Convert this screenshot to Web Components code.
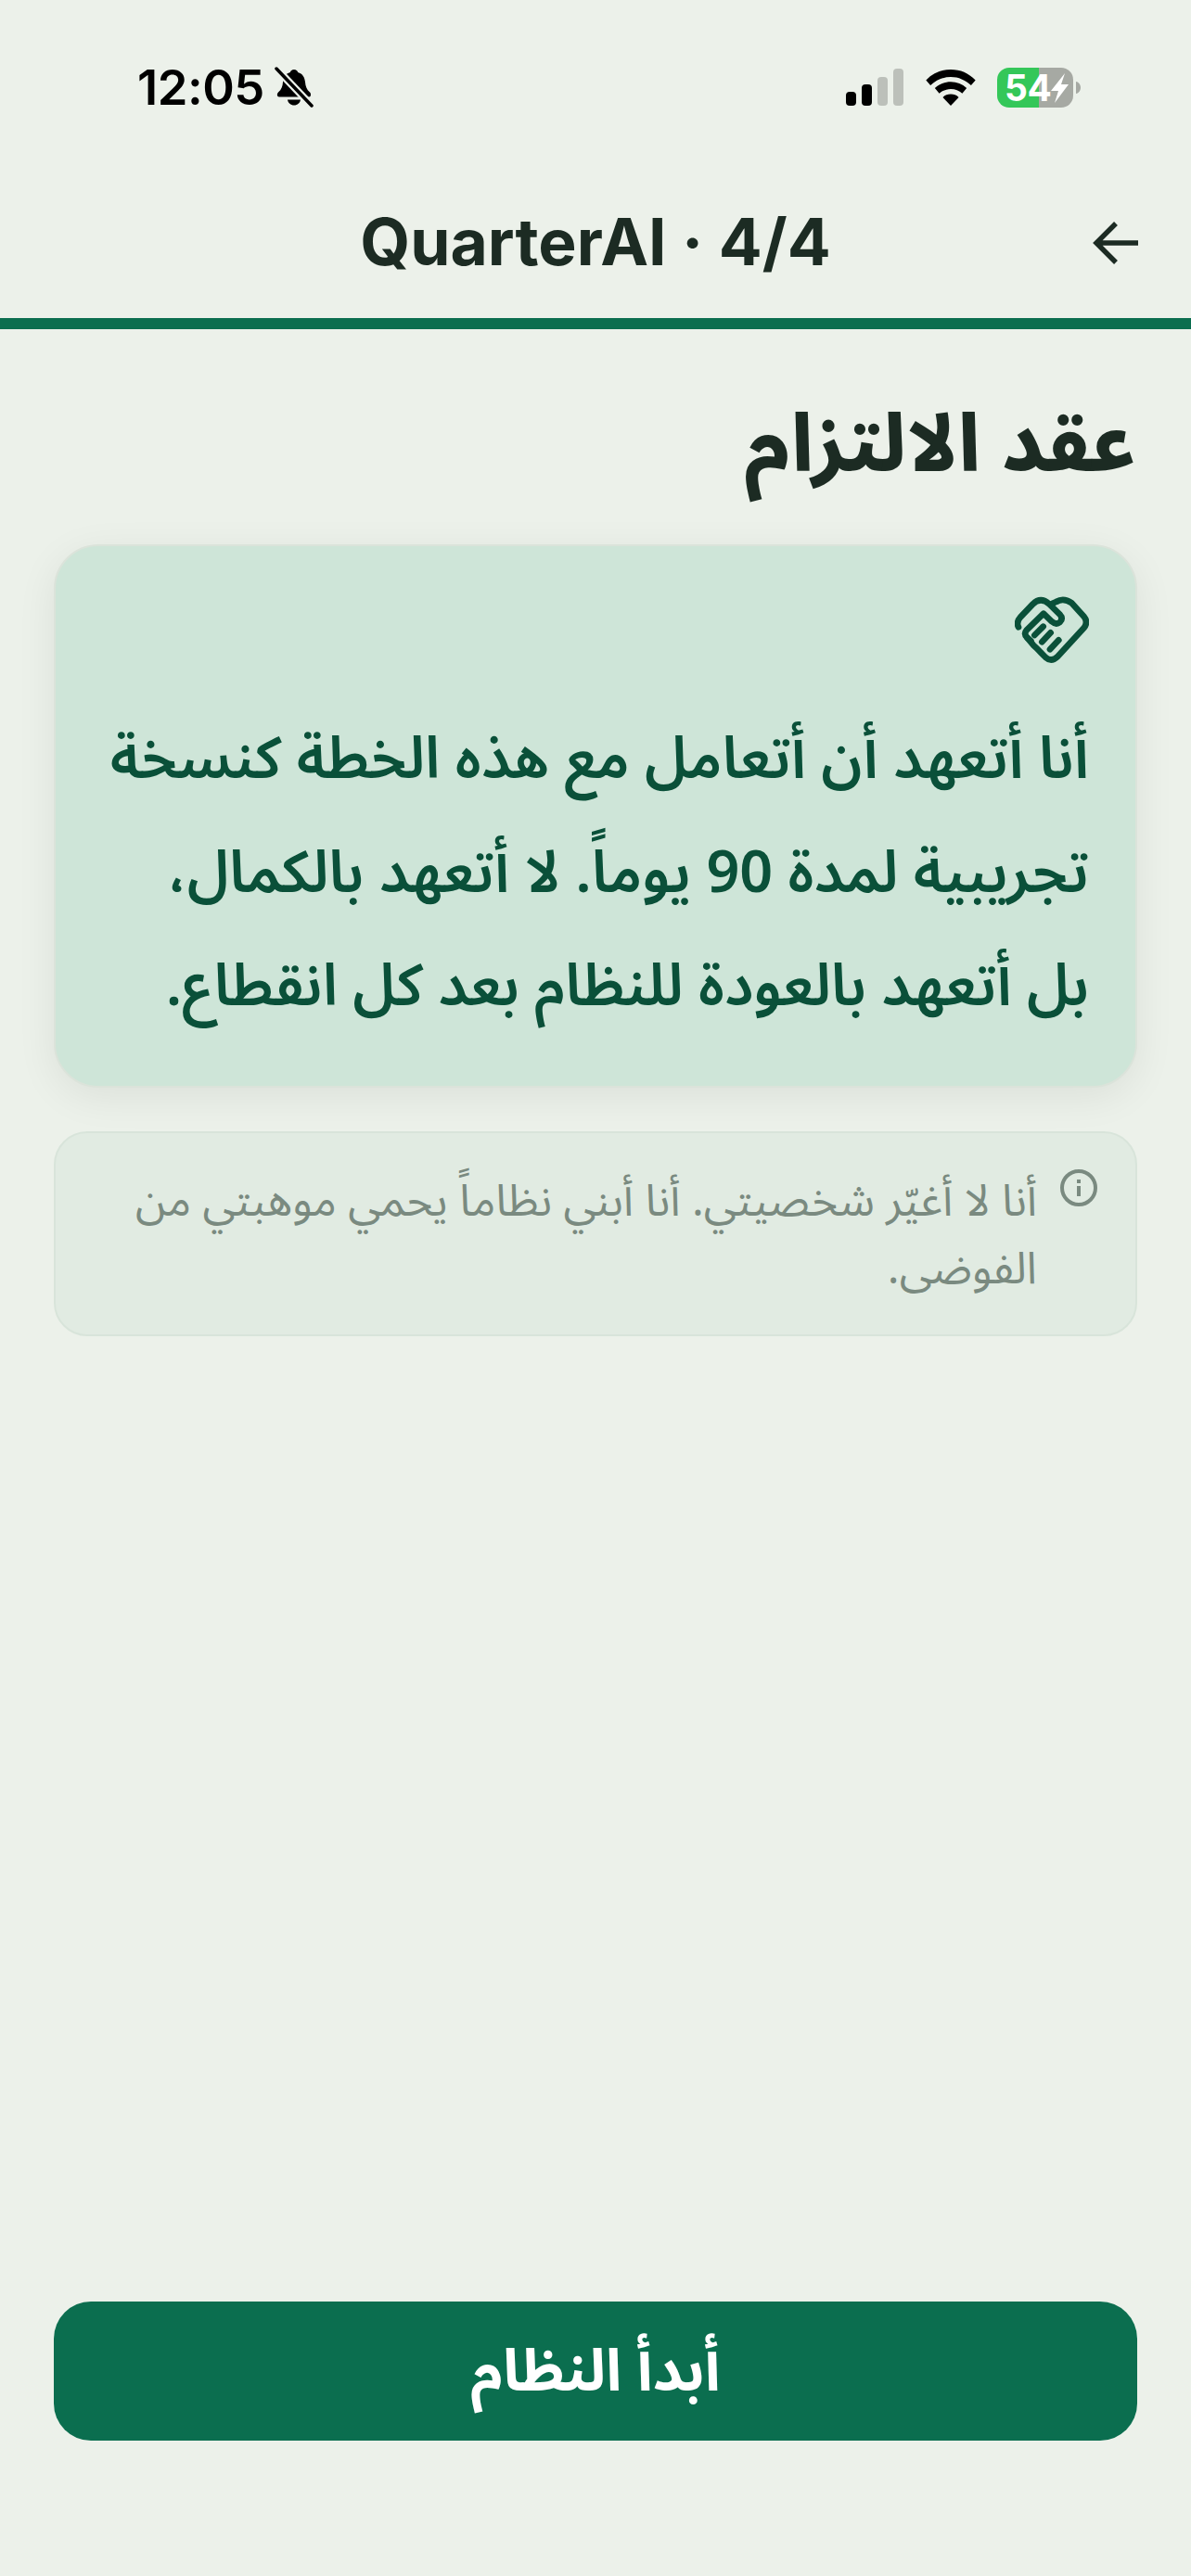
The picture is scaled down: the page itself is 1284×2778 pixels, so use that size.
<!DOCTYPE html>
<html lang="ar">
<head>
<meta charset="utf-8">
<title>QuarterAI</title>
<style>
  html, body { margin: 0; height: 100%; background: #ecf1ea; }
  body { font-family: "Noto Sans Arabic", "DejaVu Sans", sans-serif; }
</style>
</head>
<body>
<app-screen>
  <status-bar></status-bar>
  <top-bar title="QuarterAI · 4/4" progress="100"></top-bar>
  <page-title>عقد الالتزام</page-title>
  <pledge-card>أنا أتعهد أن أتعامل مع هذه الخطة كنسخة تجريبية لمدة 90 يوماً. لا أتعهد بالكمال، بل أتعهد بالعودة للنظام بعد كل انقطاع.</pledge-card>
  <info-note>أنا لا أغيّر شخصيتي. أنا أبني نظاماً يحمي موهبتي من الفوضى.</info-note>
  <start-button>أبدأ النظام</start-button>
</app-screen>

<script>
class AppScreen extends HTMLElement {
  constructor() {
    super();
    this.attachShadow({ mode: "open" });
    this.shadowRoot.innerHTML = `
    <style>
      :host { display: flex; flex-direction: column; height: 2778px; box-sizing: border-box; padding-bottom: 146px; }
    </style>
    <slot></slot>
    `;
  }
}

class StatusBar extends HTMLElement {
  constructor() {
    super();
    this.attachShadow({ mode: "open" });
    this.shadowRoot.innerHTML = `
    <style>
      :host { display: flex; align-items: center; justify-content: space-between; height: 188px; box-sizing: border-box; padding: 0 118px 0 148px; color: #000; font-family: Inter, sans-serif; }
      .left, .right { display: flex; align-items: center; }
      .time { font-size: 52.500px; font-weight: 600; line-height: 60px; letter-spacing: -0.5px; }
      .left svg { margin-left: 11px; }
      .right svg { display: block; }
      .wifi { margin-left: 22px; }
      .battery { margin-left: 22px; position: relative; width: 91px; height: 43px; }
      .battery b { position: absolute; left: 8px; top: 0; font-size: 39px; line-height: 43px; font-weight: 700; color: #fff; letter-spacing: -0.5px; }
    </style>
    <div class="left">
      <span class="time">12:05</span>
      <svg width="42" height="44" viewBox="0 0 42 44">
        <path d="M21 3c2.400 0 3.600 1.400 4.200 3 5 1.400 7.300 5.500 7.800 10.500.4 4.500 1.500 8 5 11 1.500 1.300 1.500 5-.8 5H5c-2.500 0-2.700-3.500-1-5 3.500-3 4.700-6.500 5-11C9.500 11.500 11.800 7.400 16.800 6 17.400 4.400 18.600 3 21 3z" fill="#000"/>
        <path d="M14 35.500h14c-.5 3.600-3.400 6-7 6s-6.500-2.400-7-6z" fill="#000"/>
        <path d="M1.500 1.500l39 41" stroke="#ecf1ea" stroke-width="8"/>
        <path d="M2 2l38 40" stroke="#000" stroke-width="3.500" stroke-linecap="round"/>
      </svg>
    </div>
    <div class="right">
      <svg width="64" height="40" viewBox="0 0 64 40">
        <rect x="1" y="25" width="11" height="15" rx="4" fill="#000"/>
        <rect x="18" y="17" width="11" height="23" rx="4" fill="#000"/>
        <rect x="35" y="9" width="11" height="31" rx="4" fill="#bcc0ba"/>
        <rect x="52" y="0" width="11" height="40" rx="4" fill="#bcc0ba"/>
      </svg>
      <svg class="wifi" width="56" height="40" viewBox="0 0 58 42">
        <path d="M29 1C18 1 9 5 1 13l5 6c6.500-6 14-9.500 23-9.500S45.500 13 52 19l5-6C49 5 40 1 29 1z" fill="#000"/>
        <path d="M29 15c-7 0-13 2.500-18 7l5 6c3.500-3 8-5 13-5s9.500 2 13 5l5-6c-5-4.500-11-7-18-7z" fill="#000"/>
        <path d="M29 29c-3.500 0-6.500 1-9 3.500L29 42l9-9.500c-2.500-2.500-5.500-3.500-9-3.500z" fill="#000"/>
      </svg>
      <div class="battery">
        <svg width="91" height="43" viewBox="0 0 91 43">
          <path d="M13 0h32v43H13A13 13 0 0 1 0 30V13A13 13 0 0 1 13 0z" fill="#34c759"/>
          <path d="M45 0h24a13 13 0 0 1 13 13v17a13 13 0 0 1-13 13H45z" fill="#a6a9a3"/>
          <path d="M85 15c3 .5 5 3.500 5 6.500s-2 6-5 6.500z" fill="#a6a9a3"/>
          <path d="M73 6L58 25h8l-4 13 15-20h-8l4-12z" fill="#fff"/>
        </svg>
        <b>54</b>
      </div>
    </div>
    `;
  }
}

class TopBar extends HTMLElement {
  constructor() {
    super();
    this.attachShadow({ mode: "open" });
    this.shadowRoot.innerHTML = `
    <style>
      :host { display: block; }
      .row { position: relative; height: 155px; display: flex; align-items: center; justify-content: center; }
      h1 { margin: 0 0 9px; font-family: Inter, sans-serif; font-size: 69.500px; font-weight: 700; color: #1c2b23; line-height: 80px; }
      svg { position: absolute; right: 56px; top: 50px; }
      .track { height: 12px; background: #d9e2d9; }
      .fill { height: 100%; background: #0b6e4f; }
    </style>
    <div class="row">
      <h1></h1>
      <svg width="50" height="48" viewBox="0 0 50 48" fill="none" stroke="#1c2b23" stroke-width="5.500">
        <path d="M49 24H4M25 3L4 24l21 21"/>
      </svg>
    </div>
    <div class="track"><div class="fill"></div></div>
    `;
  }

  connectedCallback() {
    this.shadowRoot.querySelector("h1").textContent = this.getAttribute("title");
    this.shadowRoot.querySelector(".fill").style.width = this.getAttribute("progress") + "%";
  }
}

class PageTitle extends HTMLElement {
  constructor() {
    super();
    this.attachShadow({ mode: "open" });
    this.shadowRoot.innerHTML = `
    <style>
      :host { display: block; direction: rtl; padding: 66px 59px 0; height: 232px; box-sizing: border-box; font-size: 85.500px; font-weight: 800; line-height: 120px; color: #1c2b23; }
    </style>
    <slot></slot>
    `;
  }
}

class PledgeCard extends HTMLElement {
  constructor() {
    super();
    this.attachShadow({ mode: "open" });
    this.shadowRoot.innerHTML = `
    <style>
      :host { display: block; direction: rtl; margin: 0 58px; height: 586px; box-sizing: border-box; padding: 54px 50px 0; background: #cee5d8; border: 2px solid #dbe3da; border-radius: 48px; box-shadow: 0 10px 44px rgba(0, 0, 0, 0.07); color: #0a5039; }
      svg { display: block; }
      .text { margin-top: 41px; font-size: 62.800px; font-weight: 600; line-height: 122.500px; }
    </style>
    <svg width="80" height="74" viewBox="0 0 240 222" fill="none" stroke="#0a5039" stroke-width="20" stroke-linecap="round" stroke-linejoin="round">
      <path d="M12 100Q4 84 18 68L58 26Q84 0 112 26L145 58Q158 72 146 84Q134 94 120 82L93 56L38 110Q28 122 40 134L52 144" />
      <path d="M120 24L134 18Q158 4 184 22L224 66Q238 84 224 102L138 196Q118 214 100 198L84 182Q74 170 60 158L40 134" />
      <path d="M92 98L64 126M116 118L88 148M142 142L114 172" />
    </svg>
    <div class="text"><slot></slot></div>
    `;
  }
}

class InfoNote extends HTMLElement {
  constructor() {
    super();
    this.attachShadow({ mode: "open" });
    this.shadowRoot.innerHTML = `
    <style>
      :host { display: flex; direction: rtl; gap: 24px; margin: 47px 58px 0; height: 221px; box-sizing: border-box; padding: 38px 40px 0; background: #e1ebe2; border: 2px solid #d8e4da; border-radius: 36px; color: #7a8a80; font-size: 47.800px; line-height: 72.500px; }
      svg { flex: none; }
    </style>
    <svg width="42" height="42" viewBox="0 0 42 42" fill="none" stroke="#7a8a80" stroke-width="4">
      <circle cx="21" cy="21" r="18"/>
      <path d="M21 19v11M21 12v4"/>
    </svg>
    <div><slot></slot></div>
    `;
  }
}

class StartButton extends HTMLElement {
  constructor() {
    super();
    this.attachShadow({ mode: "open" });
    this.shadowRoot.innerHTML = `
    <style>
      :host { display: flex; align-items: center; justify-content: center; margin: auto 58px 0; height: 150px; background: #0b6e4f; border-radius: 40px; color: #fff; font-size: 63px; font-weight: 700; direction: rtl; }
    </style>
    <slot></slot>
    `;
  }
}

customElements.define("app-screen", AppScreen);
customElements.define("status-bar", StatusBar);
customElements.define("top-bar", TopBar);
customElements.define("page-title", PageTitle);
customElements.define("pledge-card", PledgeCard);
customElements.define("info-note", InfoNote);
customElements.define("start-button", StartButton);
</script>
</body>
</html>
